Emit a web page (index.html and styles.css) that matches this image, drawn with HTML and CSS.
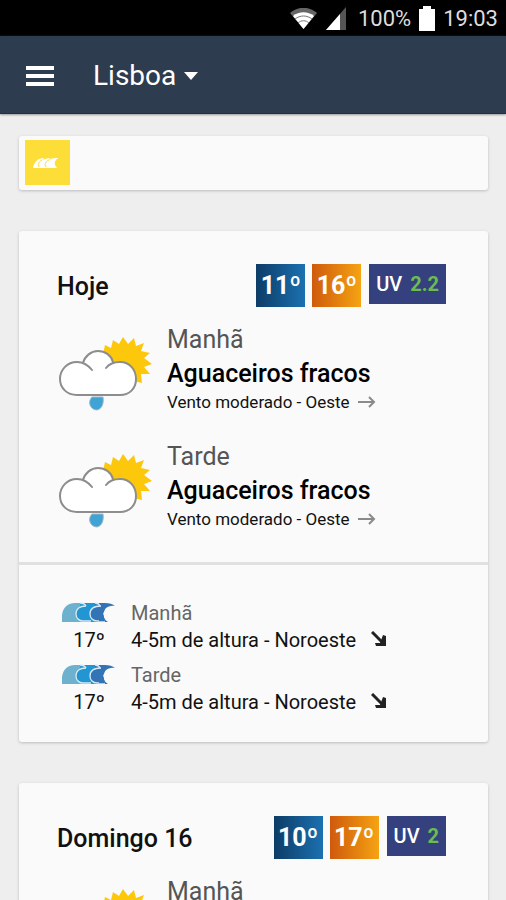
FILE: index.html
```html
<!DOCTYPE html>
<html lang="pt">

<head>
    <meta charset="utf-8">
    <meta name="viewport" content="width=device-width, initial-scale=1">
    <title>Lisboa</title>
    <link rel="stylesheet" href="styles.css">
</head>

<body>
    <!-- Shared drawings -->
    <svg class="symbols" aria-hidden="true">
        <symbol id="showers" viewBox="0 0 94 76">
            <path fill="#fdc70c" d="M46 9L52 12 54 4 60 8 64 1 69 8 75 2 77 10 85 7 82 15 91 17 85 22 93 28 85 31 91 38 82 38 83 47 70 44H50L44 18z"/>
            <path fill="#fff" d="M18 59C8 59 1 52 1 43s7-17 17-17l6 1c2-7 8-12 15-12 7 0 13 4 15 11l7 0c10 0 16 8 16 17s-6 16-16 16z"/>
            <path fill="none" stroke="#8d8d8d" stroke-width="2" stroke-linecap="round" d="M33 34C29 29 24 26 18 26 8 26 1 34 1 43s7 16 17 16h43c10 0 16-7 16-16s-6-17-16-17c-6 0-11 2-14 6M24 27c2-7 8-12 15-12 7 0 13 4 15 11"/>
            <path fill="#3fa3d6" stroke="#9db7c4" d="M44 61H33c-2 2-3 5-2 8 1 3 4 5 7 5 5-1 7-7 6-13z"/>
        </symbol>
        <symbol id="waves" viewBox="0 0 56 22">
            <path fill="#6db1cf" d="M1 21V14C2 6 7 2 14 2h12v19z"/>
            <path fill="#2296d2" d="M19 2h16v19H21z"/>
            <path fill="#3274b5" d="M34 2h10c4 0 8 1 10 3-7-1-12 3-12 8 0 4 2 6 5 8H34z"/>
            <path fill="#2296d2" stroke="#d5eaf5" stroke-width="1.3" d="M25 5c-6 0-10 3-10 8 0 4 3 7 7 7h8"/>
            <path fill="#3274b5" stroke="#d5eaf5" stroke-width="1.3" d="M40 5c-7 0-11 3-11 8 0 4 3 7 7 7h8"/>
            <path fill="none" stroke="#d5eaf5" stroke-width="1.3" d="M19 2c2 0 5 1 6 3M34 2c2 0 4 1 5 3"/>
            <path fill="#3274b5" d="M38 6h7l-3 7 2 7h-6z"/>
        </symbol>
        <symbol id="arrow-east" viewBox="0 0 18 12">
            <path fill="none" stroke="#8a8a8a" stroke-width="2" d="M0 6h16M11 1l5 5-5 5"/>
        </symbol>
        <symbol id="arrow-southeast" viewBox="0 0 16 16">
            <path fill="none" stroke="#222" stroke-width="3" d="M1 1l11 11"/>
            <path fill="#222" d="M12 4l3 1v10H5l-1-3h5z"/>
        </symbol>
    </svg>

    <div class="status">
        <svg width="27" height="21" viewBox="0 0 27 21">
            <path fill="#666" d="M0 5C8-2 19-2 27 5L13.500 21z"/>
            <path fill="#fff" d="M3 8c6-5 15-5 21 0L13.500 21z"/>
            <path fill="none" stroke="#777" d="M5 11c5-4 12-4 17 0M8 15c3-3 8-3 11 0"/>
        </svg>
        <svg class="signal" width="20" height="23" viewBox="0 0 20 23">
            <path fill="#555" d="M20 0v23H0z"/>
            <path fill="#fff" d="M14 7v16H0z"/>
        </svg>
        <span class="level">100%</span>
        <svg width="16" height="25" viewBox="0 0 16 25">
            <path fill="#fff" d="M4 0h8v3h4v22H0V3h4z"/>
        </svg>
        <span class="clock">19:03</span>
    </div>

    <header class="toolbar">
        <button class="menu" type="button" aria-label="Menu">
            <svg width="28" height="20" viewBox="0 0 28 20">
                <path fill="#fff" d="M0 0h28v4H0zM0 8h28v4H0zM0 16h28v4H0z"/>
            </svg>
        </button>
        <label class="city">
            <select aria-label="Cidade">
                <option>Lisboa</option>
            </select>
            <svg width="14" height="8" viewBox="0 0 14 8">
                <path fill="#fff" d="M0 0h14L7 8z"/>
            </svg>
        </label>
    </header>

    <main>
        <section class="card banner">
            <svg width="45" height="45" viewBox="0 0 45 45">
                <rect width="45" height="45" fill="#fdde38"/>
                <path fill="#fff" d="M8 28c1-6 5-10 11-10l-1 2c2-1 4-2 7-2l-1 2c3-2 6-2 10-2-3 1-5 4-4 7l2 3z"/>
                <path fill="none" stroke="#fdde38" d="M17 20c-3 1-4 4-3 7M24 20c-3 1-5 4-3 7"/>
            </svg>
        </section>

        <section class="card">
            <div class="day">
                <h2>Hoje</h2>
                <span class="temp min">11º</span>
                <span class="temp max">16º</span>
                <span class="uv">UV <b>2.2</b></span>
            </div>
            <div class="period">
                <svg class="weather"><use href="#showers"/></svg>
                <div>
                    <h3>Manhã</h3>
                    <p class="sky">Aguaceiros fracos</p>
                    <p class="wind">Vento moderado - Oeste <svg width="18" height="12"><use href="#arrow-east"/></svg></p>
                </div>
            </div>
            <div class="period">
                <svg class="weather"><use href="#showers"/></svg>
                <div>
                    <h3>Tarde</h3>
                    <p class="sky">Aguaceiros fracos</p>
                    <p class="wind">Vento moderado - Oeste <svg width="18" height="12"><use href="#arrow-east"/></svg></p>
                </div>
            </div>
            <div class="sea">
                <div class="tide">
                    <div class="water">
                        <svg width="56" height="22"><use href="#waves"/></svg>
                        <span>17º</span>
                    </div>
                    <div>
                        <h4>Manhã</h4>
                        <p>4-5m de altura - Noroeste <svg width="16" height="16"><use href="#arrow-southeast"/></svg></p>
                    </div>
                </div>
                <div class="tide">
                    <div class="water">
                        <svg width="56" height="22"><use href="#waves"/></svg>
                        <span>17º</span>
                    </div>
                    <div>
                        <h4>Tarde</h4>
                        <p>4-5m de altura - Noroeste <svg width="16" height="16"><use href="#arrow-southeast"/></svg></p>
                    </div>
                </div>
            </div>
        </section>

        <section class="card">
            <div class="day">
                <h2>Domingo 16</h2>
                <span class="temp min">10º</span>
                <span class="temp max">17º</span>
                <span class="uv">UV <b>2</b></span>
            </div>
            <div class="period">
                <svg class="weather"><use href="#showers"/></svg>
                <div>
                    <h3>Manhã</h3>
                </div>
            </div>
        </section>
    </main>
</body>

</html>
```
FILE: styles.css
```css
* {
    box-sizing: border-box;
}

body {
    margin: 0;
    height: 100vh;
    overflow: hidden;
    background: #eee;
    color: #111;
    font-family: Roboto, sans-serif;
}

h2, h3, h4, p {
    margin: 0;
}

.symbols {
    position: absolute;
    width: 0;
    height: 0;
}

.status {
    display: flex;
    align-items: center;
    justify-content: flex-end;
    height: 36px;
    padding-right: 8px;
    background: #000;
    color: #ddd;
    font-size: 22px;
}

.signal {
    margin: 0 12px 0 9px;
}

.clock {
    margin-left: 8px;
}

.level {
    margin-right: 8px;
}

.toolbar {
    display: flex;
    align-items: center;
    height: 78px;
    padding: 2px 26px 0;
    background: #2d3c4e;
    border-bottom: 1px solid #222f3d;
    box-shadow: 0 1px 2px #999;
}

.menu {
    display: flex;
    padding: 0;
    border: 0;
    background: none;
}

.city {
    display: flex;
    align-items: center;
    gap: 7px;
    margin-left: 39px;
}

.city select {
    appearance: none;
    padding: 0;
    border: 0;
    background: none;
    color: #fff;
    font: 28px Roboto, sans-serif;
}

main {
    display: flex;
    flex-direction: column;
    gap: 41px;
    padding: 22px 18px 0 19px;
}

.card {
    background: #fafafa;
    border-radius: 3px;
    box-shadow: 0 1px 3px #bbb;
}

.banner {
    display: flex;
    padding: 4px 6px 5px;
}

.day {
    display: flex;
    align-items: flex-start;
    gap: 7px;
    padding: 33px 42px 0 38px;
}

.day h2 {
    flex: 1;
    font-size: 25px;
    font-weight: 500;
    line-height: 46px;
}

.temp {
    width: 49px;
    color: #fff;
    font-size: 25px;
    font-weight: 700;
    line-height: 43px;
    text-align: center;
}

.min {
    background: linear-gradient(to right, #0d3c66, #1b71b0);
}

.max {
    background: linear-gradient(to right, #cf5a0c, #f5a313);
}

.uv {
    margin-left: 1px;
    padding: 0 7px;
    background: #35417f;
    color: #fff;
    font-size: 20px;
    font-weight: 500;
    line-height: 40px;
}

.uv b {
    margin-left: 3px;
    color: #6cbd4f;
    font-weight: 700;
}

.period {
    display: flex;
    gap: 14px;
    height: 117px;
    padding: 14px 0 0 40px;
}

.weather {
    width: 94px;
    height: 76px;
    margin-top: 12px;
}

.period h3 {
    color: #555;
    font-size: 25px;
    font-weight: 400;
    line-height: 32px;
}

.sky {
    color: #000;
    font-size: 25px;
    font-weight: 500;
    line-height: 36px;
}

.wind {
    font-size: 17px;
    line-height: 20px;
}

.wind svg {
    margin-left: 4px;
}

.sea {
    margin-top: 18px;
    padding: 35px 0 18px 42px;
    border-top: 3px solid #e0e0e0;
}

.tide {
    display: flex;
    gap: 14px;
    height: 62px;
}

.water {
    display: flex;
    flex-direction: column;
    align-items: center;
    width: 56px;
    padding-top: 1px;
    font-size: 20px;
    line-height: 34px;
}

.tide h4 {
    color: #666;
    font-size: 20px;
    font-weight: 400;
    line-height: 26px;
}

.tide p {
    font-size: 20px;
    line-height: 28px;
}

.tide p svg {
    margin-left: 10px;
}
```
